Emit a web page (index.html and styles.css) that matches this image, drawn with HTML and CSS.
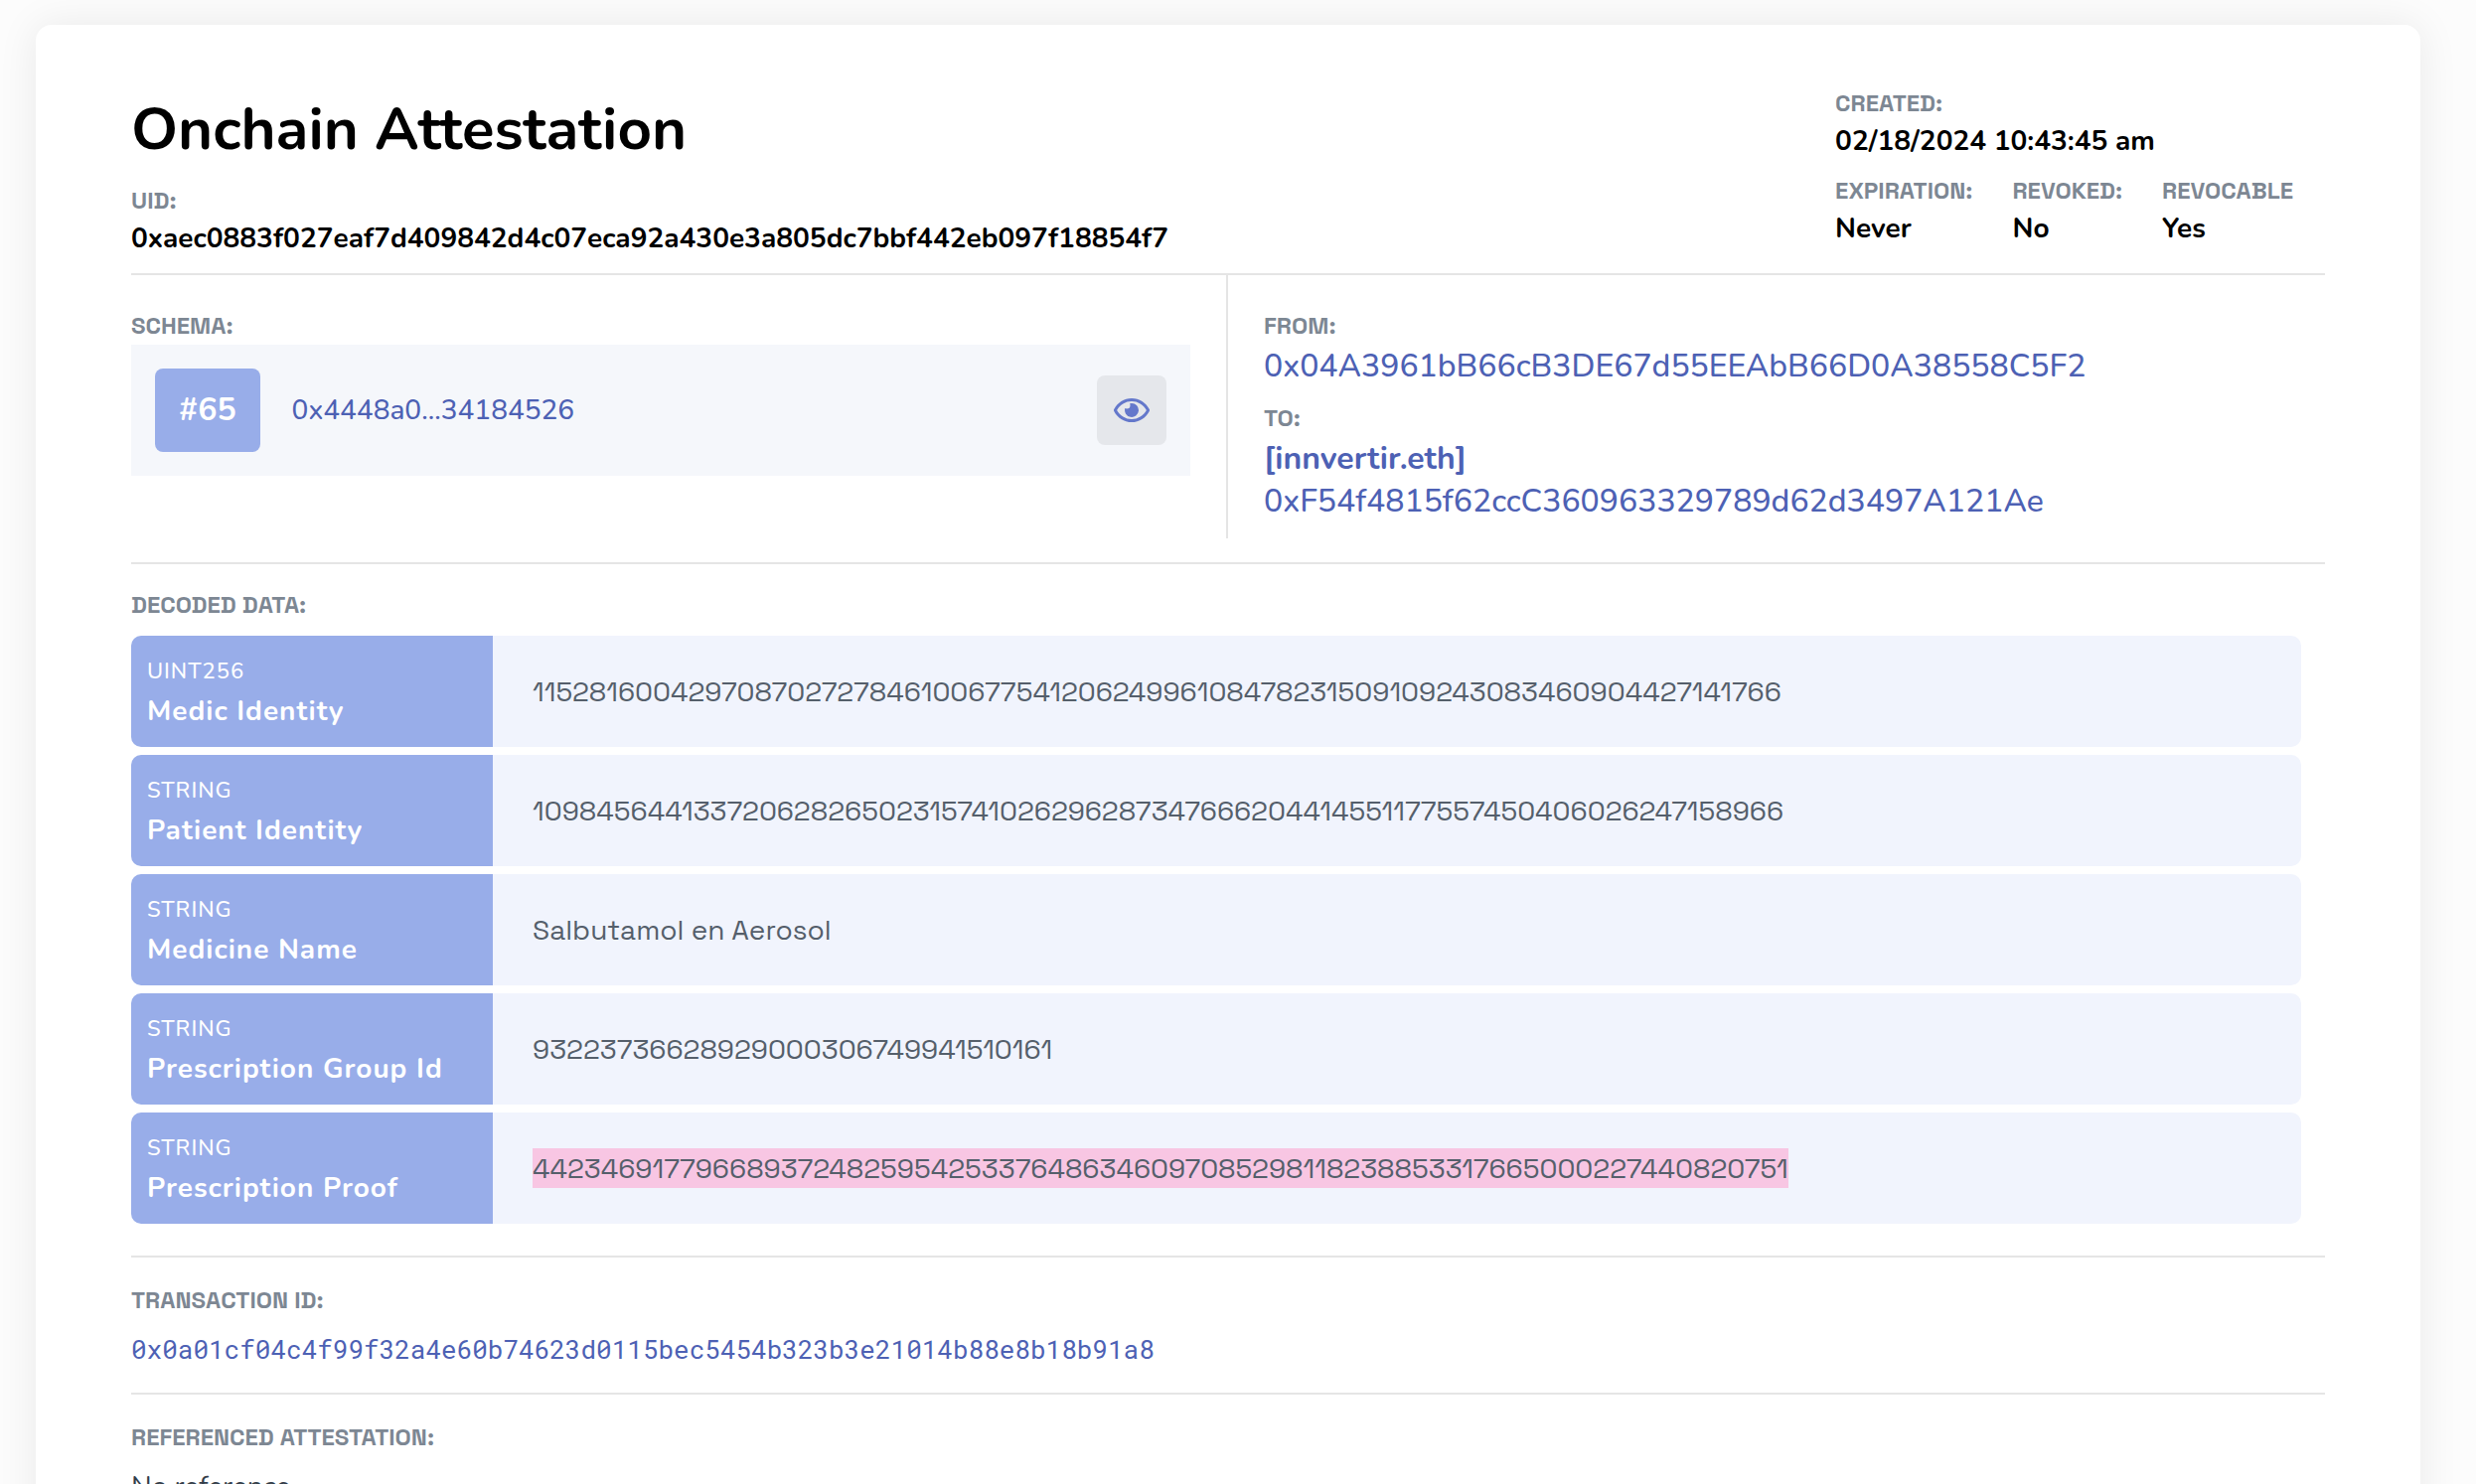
FILE: index.html
```html
<!DOCTYPE html>
<html lang="en">
<head>
<meta charset="utf-8">
<meta name="viewport" content="width=device-width, initial-scale=1">
<title>Onchain Attestation</title>
<link rel="stylesheet" href="styles.css">
</head>
<body>
<main class="card">
  <header class="header">
    <div class="identity">
      <h1 class="title">Onchain Attestation</h1>
      <div class="field">
        <div class="label">UID:</div>
        <div class="fact">0xaec0883f027eaf7d409842d4c07eca92a430e3a805dc7bbf442eb097f18854f7</div>
      </div>
    </div>
    <div class="status">
      <div class="field">
        <div class="label">CREATED:</div>
        <div class="fact">02/18/2024 10:43:45 am</div>
      </div>
      <div class="status-row">
        <div class="field">
          <div class="label">EXPIRATION:</div>
          <div class="fact">Never</div>
        </div>
        <div class="field">
          <div class="label">REVOKED:</div>
          <div class="fact">No</div>
        </div>
        <div class="field">
          <div class="label">REVOCABLE</div>
          <div class="fact">Yes</div>
        </div>
      </div>
    </div>
  </header>

  <section class="parties">
    <div class="schema field">
      <div class="label">SCHEMA:</div>
      <div class="schema-box">
        <span class="schema-number">#65</span>
        <a class="schema-link" href="#schema">0x4448a0...34184526</a>
        <button class="eye-button" type="button" aria-label="View schema">
          <svg class="eye" viewBox="0 0 576 512" aria-hidden="true"><path d="M288 144a110.940 110.940 0 0 0-31.240 5 55.400 55.400 0 0 1 7.240 27 56 56 0 0 1-56 56 55.400 55.400 0 0 1-27-7.240A111.710 111.710 0 1 0 288 144zm284.520 97.400C518.290 135.590 410.930 64 288 64S57.680 135.640 3.480 241.410a32.350 32.350 0 0 0 0 29.190C57.710 376.410 165.070 448 288 448s230.320-71.640 284.520-177.410a32.350 32.350 0 0 0 0-29.190zM288 400c-98.650 0-189.090-55-237.930-144C98.910 167 189.340 112 288 112s189.090 55 237.930 144C477.100 345 386.660 400 288 400z"/></svg>
        </button>
      </div>
    </div>
    <div class="addresses">
      <div class="field">
        <div class="label">FROM:</div>
        <a class="address" href="#from">0x04A3961bB66cB3DE67d55EEAbB66D0A38558C5F2</a>
      </div>
      <div class="field">
        <div class="label">TO:</div>
        <a class="address" href="#to"><strong class="ens">[innvertir.eth]</strong>0xF54f4815f62ccC360963329789d62d3497A121Ae</a>
      </div>
    </div>
  </section>

  <section class="section section-data">
    <h2 class="label" id="decoded">DECODED DATA:</h2>
    <table class="decoded" aria-labelledby="decoded">
      <tbody>
        <tr>
          <th scope="row"><span class="type">UINT256</span><span class="name">Medic Identity</span></th>
          <td>11528160042970870272784610067754120624996108478231509109243083460904427141766</td>
        </tr>
        <tr>
          <th scope="row"><span class="type">STRING</span><span class="name">Patient Identity</span></th>
          <td>10984564413372062826502315741026296287347666204414551177557450406026247158966</td>
        </tr>
        <tr>
          <th scope="row"><span class="type">STRING</span><span class="name">Medicine Name</span></th>
          <td>Salbutamol en Aerosol</td>
        </tr>
        <tr>
          <th scope="row"><span class="type">STRING</span><span class="name">Prescription Group Id</span></th>
          <td>93223736628929000306749941510161</td>
        </tr>
        <tr>
          <th scope="row"><span class="type">STRING</span><span class="name">Prescription Proof</span></th>
          <td><mark class="highlight">4423469177966893724825954253376486346097085298118238853317665000227440820751</mark></td>
        </tr>
      </tbody>
    </table>
  </section>

  <section class="section">
    <h2 class="label">TRANSACTION ID:</h2>
    <a class="transaction" href="#transaction">0x0a01cf04c4f99f32a4e60b74623d0115bec5454b323b3e21014b88e8b18b91a8</a>
  </section>

  <section class="section">
    <h2 class="label">REFERENCED ATTESTATION:</h2>
    <p class="reference">No reference</p>
  </section>
</main>
</body>
</html>
```
FILE: styles.css
```css
:root {
  --rule: #e5e5e5;
  --link: #4d61b4;
  --label: #7d8793;
  --accent: #98ade9;
}

* {
  box-sizing: border-box;
}

body {
  margin: 0;
  padding: 25px 56px 0 36px;
  background: #fcfcfc;
  color: #000;
  font-family: Nunito, "Open Sans", sans-serif;
  font-size: 28px;
  line-height: 38px;
}

a {
  color: var(--link);
  text-decoration: none;
}

.card {
  padding: 64px 96px;
  border-radius: 16px;
  background: #fff;
  box-shadow: 0 0 40px rgba(0, 0, 0, 0.08);
}

.header {
  display: flex;
  justify-content: space-between;
  padding-bottom: 16px;
  border-bottom: 2px solid var(--rule);
}

.identity,
.status {
  display: flex;
  flex-direction: column;
  gap: 16px;
}

.status {
  padding-right: 32px;
}

.status-row {
  display: flex;
  gap: 40px;
}

.title {
  margin: 0;
  font-size: 60px;
  font-weight: 700;
  line-height: 82px;
}

.field {
  display: flex;
  flex-direction: column;
  gap: 4px;
}

.label {
  margin: 0;
  color: var(--label);
  font-family: "Space Grotesk", Roboto, sans-serif;
  font-size: 24px;
  font-weight: 700;
  line-height: 30px;
}

.fact {
  font-weight: 700;
}

.parties {
  display: grid;
  grid-template-columns: 1fr 1fr;
  padding-bottom: 24px;
  border-bottom: 2px solid var(--rule);
}

.schema {
  padding: 36px 36px 16px 0;
  border-right: 2px solid var(--rule);
}

.schema-box {
  display: flex;
  align-items: center;
  padding: 24px;
  background: #f5f7fb;
}

.schema-number {
  padding: 20px 24px;
  border-radius: 8px;
  background: var(--accent);
  color: #fff;
  font-size: 32px;
  font-weight: 700;
  line-height: 44px;
}

.schema-link {
  margin-left: 32px;
  font-weight: 500;
}

.eye-button {
  display: flex;
  align-items: center;
  justify-content: center;
  width: 70px;
  height: 70px;
  margin-left: auto;
  padding: 0;
  border: 0;
  border-radius: 8px;
  background: #e5e7eb;
  cursor: pointer;
}

.eye {
  width: 36px;
  height: 32px;
  fill: #6478cb;
}

.addresses {
  display: flex;
  flex-direction: column;
  gap: 16px;
  padding: 36px 0 16px 36px;
}

.address {
  font-size: 32px;
  font-weight: 500;
  line-height: 43px;
}

.ens {
  display: block;
  font-weight: 700;
}

.section {
  display: flex;
  flex-direction: column;
  gap: 16px;
  padding: 28px 0 26px;
}

.section-data {
  padding: 26px 0 32px;
}

.section + .section {
  border-top: 2px solid var(--rule);
}

.decoded {
  width: calc(100% - 24px);
  margin: -8px 0;
  border-spacing: 0 8px;
  color: #555f6b;
  font-family: "Space Grotesk", Inter, sans-serif;
  line-height: 40px;
}

.decoded th {
  width: 364px;
  padding: 20px 16px 16px;
  border-radius: 10px 0 0 10px;
  background: var(--accent);
  color: #fff;
  font-family: Nunito, "Open Sans", sans-serif;
  letter-spacing: 1px;
  text-align: left;
}

.decoded td {
  padding: 0 40px;
  border-radius: 0 10px 10px 0;
  background: #f1f4fd;
}

.type,
.name {
  display: block;
}

.type {
  margin-bottom: 4px;
  font-size: 22px;
  font-weight: 500;
  line-height: 32px;
}

.name {
  font-weight: 700;
}

.highlight {
  display: inline-block;
  background: #f8c6e3;
  color: inherit;
}

.transaction {
  font-family: "Roboto Mono", "DejaVu Sans Mono", monospace;
  font-size: 26px;
  line-height: 36px;
}

.reference {
  margin: 0;
  color: #333d49;
}
```
